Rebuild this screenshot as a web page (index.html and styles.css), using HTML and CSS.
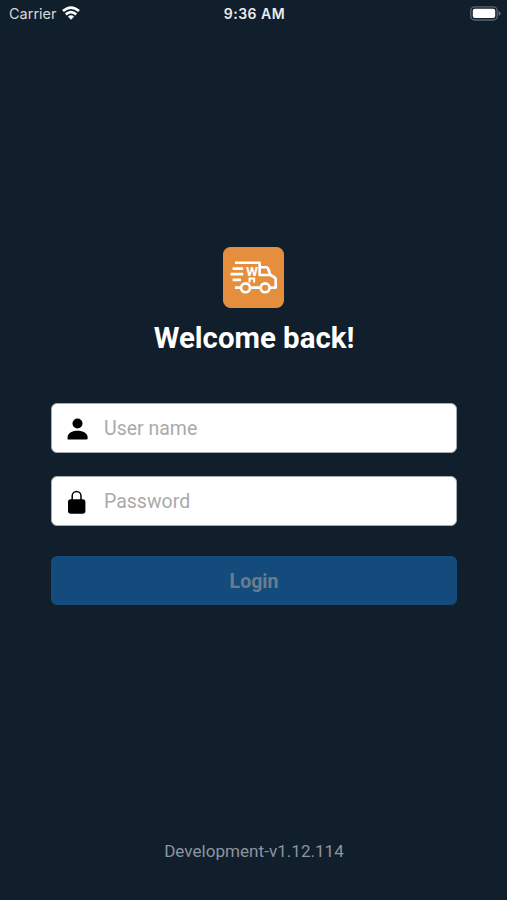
FILE: index.html
```html
<!DOCTYPE html>
<html lang="en">
<head>
<meta charset="utf-8">
<title>Login</title>
<link rel="stylesheet" href="styles.css">
</head>
<body>
<header class="status">
  <div class="carrier"><span>Carrier</span>
    <svg class="wifi" viewBox="0 0 18 14"><g fill="none" stroke="#fff" stroke-width="2.7"><path d="M1 5.1Q9-2 17 5.1"/><path d="M3.800 8.400q5.200-4.400 10.400 0"/></g><path fill="#fff" d="M5.900 10.500q3.100-2.600 6.200 0L9 13.700z"/></svg>
  </div>
  <time class="clock">9:36 AM</time>
  <svg class="battery" viewBox="0 0 31 15"><rect x=".8" y=".8" width="26.4" height="13.2" rx="3.8" fill="none" stroke="#5c6670" stroke-width="1.3"/><rect x="2.800" y="2.800" width="22.400" height="9.200" rx="2" fill="#fff"/><path d="M28.600 5q2 .7 2 2.400t-2 2.400z" fill="#68717b"/></svg>
</header>
<main class="login">
  <svg class="logo" viewBox="28 20 184 184">
    <rect x="28" y="20" width="184" height="184" rx="23" fill="#e58f3e"/>
    <g fill="none" stroke="#fff" stroke-width="8" stroke-linejoin="round">
      <path d="M64 67.500H138.500V104.500H171M138.500 81H158Q162 81 164 85L171 104.500L184 112Q187 114 187 118V142.500H170"/>
      <path d="M57 85H89M51 102H89M57 119H82M64 142.500H82M110 142.500H141" stroke-width="8.500"/>
      <circle cx="96" cy="143" r="13.500"/><circle cx="155" cy="143" r="13.500"/>
      <path d="M108 127V115H122V127" stroke-width="6" stroke-linejoin="miter"/>
    </g>
    <text class="logo-letter" x="115.500" y="109" text-anchor="middle" textLength="36" lengthAdjust="spacingAndGlyphs">W</text>
  </svg>
  <h1 class="title">Welcome back!</h1>
  <form class="form">
    <label class="field">
      <svg class="icon" viewBox="0 0 22 24"><circle cx="10.500" cy="6.500" r="5" /><path d="M.6 22.500v-2.300c0-3.900 4.300-6.500 9.900-6.500s10.100 2.600 10.100 6.500v1.200q0 1.100-1.100 1.100z"/></svg>
      <input type="text" placeholder="User name">
    </label>
    <label class="field">
      <svg class="icon" viewBox="0 0 22 24"><path d="M5.200 11V5.900a4.400 4.400 0 0 1 8.800 0V11" fill="none" stroke="#000" stroke-width="1.500"/><rect x="1" y="9.300" width="17.400" height="14.500" rx="2.800"/></svg>
      <input type="password" placeholder="Password">
    </label>
    <button class="submit" type="button" disabled>Login</button>
  </form>
</main>
<footer class="version">Development-v1.12.114</footer>
</body>
</html>
```
FILE: styles.css
```css
* {
  box-sizing: border-box;
}

body {
  margin: 0;
  height: 900px;
  display: flex;
  flex-direction: column;
  overflow: hidden;
  background: #111e2b;
  color: #fff;
  font-family: Roboto, sans-serif;
}

.status {
  height: 28px;
  padding: 0 6px 0 9px;
  display: grid;
  grid-template-columns: 1fr auto 1fr;
  align-items: center;
  font: 14.5px/28px Inter, sans-serif;
}

.carrier {
  display: flex;
  align-items: center;
  gap: 5px;
  color: #d4d9de;
}

.wifi {
  width: 18px;
  height: 14px;
  margin-top: -2px;
}

.clock {
  margin-left: -1px;
  font-weight: 600;
  font-size: 14px;
  letter-spacing: 0.5px;
  color: #e9edf1;
}

.battery {
  width: 31px;
  height: 15px;
  justify-self: end;
  margin-top: -2px;
}

.login {
  flex: 1;
  padding: 219px 50px 0 51px;
  display: flex;
  flex-direction: column;
  align-items: center;
}

.logo {
  width: 61px;
  height: 61px;
  margin-right: 1px;
}

.logo-letter {
  font: 700 36px Roboto, sans-serif;
  fill: #fff;
}

.title {
  margin: 12px 0 0;
  font-size: 29.4px;
  line-height: 36px;
  font-weight: 700;
}

.form {
  width: 100%;
  margin-top: 47px;
  display: flex;
  flex-direction: column;
}

.field {
  height: 50px;
  margin-bottom: 23px;
  padding-left: 15px;
  display: flex;
  align-items: center;
  background: #fff;
  border: 1px solid #a4abb2;
  border-radius: 6px;
}

.icon {
  width: 22px;
  height: 24px;
  flex: none;
  margin-top: 1px;
}

.field input {
  flex: 1;
  min-width: 0;
  margin-left: 15px;
  padding: 2px 0 0;
  border: 0;
  outline: 0;
  background: none;
  font: 19.5px/24px Roboto, sans-serif;
}

.field input::placeholder {
  color: #aaa;
  opacity: 1;
}

.submit {
  height: 49px;
  margin-top: 7px;
  padding: 2px 0 0;
  border: 0;
  border-radius: 6px;
  background: #134c7c;
  color: #6b7c8d;
  font: 700 19.5px/24px Roboto, sans-serif;
}

.version {
  height: 61px;
  padding-left: 1px;
  text-align: center;
  color: #8b95a1;
  font-size: 17.1px;
  line-height: 24px;
}
```
